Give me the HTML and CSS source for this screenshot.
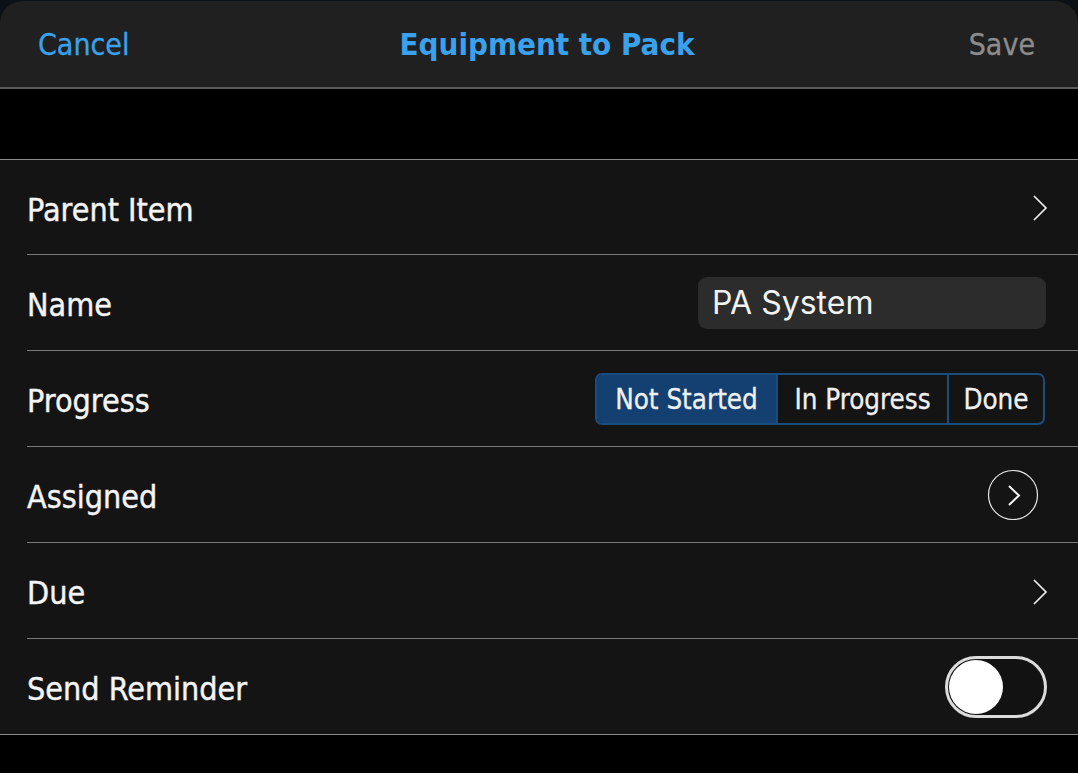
FILE: index.html
```html
<!DOCTYPE html>
<html>
<head>
<meta charset="utf-8">
<link rel="stylesheet" href="styles.css">
</head>
<body>
<div class="sheet">
  <header class="nav">
    <span class="nav-btn cancel">Cancel</span>
    <span class="nav-title">Equipment to Pack</span>
    <span class="nav-btn save">Save</span>
  </header>
  <div class="gap"></div>
  <section class="list">
    <div class="row first">
      <span class="label">Parent Item</span>
      <svg class="chev" width="16" height="26" viewBox="0 0 16 26"><path d="M2 1 L14 13 L2 25" fill="none" stroke="#ececec" stroke-width="1.7"/></svg>
    </div>
    <div class="row">
      <span class="label">Name</span>
      <div class="input">PA System</div>
    </div>
    <div class="row">
      <span class="label">Progress</span>
      <div class="seg">
        <span class="seg-item active">Not Started</span>
        <span class="seg-item">In Progress</span>
        <span class="seg-item">Done</span>
      </div>
    </div>
    <div class="row">
      <span class="label">Assigned</span>
      <svg class="circ" width="52" height="52" viewBox="0 0 52 52"><circle cx="26" cy="26" r="24.5" fill="none" stroke="#e8e8e8" stroke-width="1.2"/><path d="M22 17 L32 26.5 L22 36" fill="none" stroke="#f4f4f4" stroke-width="2"/></svg>
    </div>
    <div class="row">
      <span class="label">Due</span>
      <svg class="chev" width="16" height="26" viewBox="0 0 16 26"><path d="M2 1 L14 13 L2 25" fill="none" stroke="#ececec" stroke-width="1.7"/></svg>
    </div>
    <div class="row last">
      <span class="label">Send Reminder</span>
      <div class="toggle"><div class="knob"></div></div>
    </div>
  </section>
</div>
</body>
</html>
```
FILE: styles.css
```css
html, body {
  margin: 0;
  padding: 0;
  background: #000;
}
body {
  width: 1078px;
  height: 773px;
  overflow: hidden;
  background: #0c1118;
  font-family: "DejaVu Sans", sans-serif;
  font-stretch: condensed;
}
.sheet {
  margin-top: 1px;
  height: 772px;
  background: #000;
  border-radius: 22px 22px 0 0;
  overflow: hidden;
}
.nav {
  height: 86px;
  background: #202020;
  border-bottom: 2px solid #5a5a5a;
  display: flex;
  align-items: center;
  justify-content: space-between;
  padding: 0 43px 0 38px;
  position: relative;
}
.nav-btn {
  font-size: 30px;
  -webkit-text-stroke: 0.3px currentColor;
}
.cancel { color: #3aa2ec; }
.save { color: #8c8c8c; }
.nav-title {
  position: absolute;
  left: 16px;
  right: 0;
  text-align: center;
  color: #3aa2ec;
  font-weight: bold;
  font-size: 31px;
  pointer-events: none;
}
.gap {
  height: 70px;
  background: #000;
  border-bottom: 1px solid #8a8a8a;
}
.list {
  background: #141414;
  padding-left: 27px;
  border-bottom: 1px solid #8a8a8a;
}
.row {
  height: 95px;
  border-bottom: 1px solid #7a7a7a;
  display: flex;
  align-items: center;
  justify-content: space-between;
  padding-right: 31px;
}
.row.first {
  height: 94px;
}
.row.last {
  border-bottom: none;
}
.label {
  color: #f4f4f4;
  font-size: 32px;
  padding-top: 5px;
  -webkit-text-stroke: 0.4px currentColor;
}
.chev {
  margin-right: -1px;
  margin-top: 2px;
}
.circ {
  margin-right: 8px;
}
.input {
  width: 348px;
  height: 52px;
  margin-right: 1px;
  box-sizing: border-box;
  padding-left: 14px;
  background: #2c2c2c;
  border-radius: 9px;
  color: #f2f2f2;
  font-family: "Inter", "Liberation Sans", sans-serif;
  font-stretch: normal;
  font-size: 32px;
  display: flex;
  align-items: center;
}
.seg {
  display: flex;
  height: 52px;
  box-sizing: border-box;
  border: 2px solid #1a4d7e;
  border-radius: 7px;
  overflow: hidden;
  margin-right: 2px;
}
.seg-item {
  display: flex;
  align-items: center;
  justify-content: center;
  color: #f0f0f0;
  font-size: 27.5px;
  -webkit-text-stroke: 0.3px currentColor;
  border-left: 2px solid #1a4d7e;
  padding: 0;
}
.seg-item:first-child {
  border-left: none;
  width: 179px;
  background: #134070;
}
.seg-item:nth-child(2) { width: 169px; }
.seg-item:nth-child(3) { width: 94px; }
.toggle {
  width: 102px;
  height: 62px;
  box-sizing: border-box;
  border: 3px solid #dcdcdc;
  border-radius: 31px;
  padding: 1px;
  display: flex;
  align-items: center;
  background: #121212;
}
.knob {
  width: 54px;
  height: 54px;
  border-radius: 50%;
  background: #fff;
}
```
